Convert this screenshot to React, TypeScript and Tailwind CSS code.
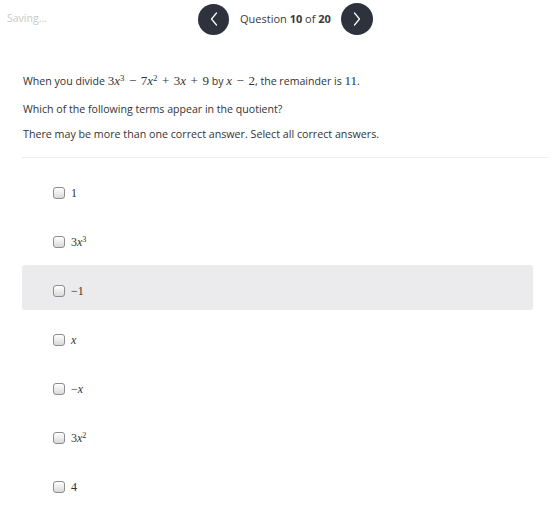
import React from "react";

const serif = { fontFamily: '"Liberation Serif", "Times New Roman", serif' };

function M({ children }: { children: React.ReactNode }) {
  return (
    <span className="text-[13px]" style={serif}>
      {children}
    </span>
  );
}
function X() {
  return <span className="italic">x</span>;
}
function Op({ children }: { children: React.ReactNode }) {
  return <span className="mx-[4.5px]">{children}</span>;
}
function Sup({ children }: { children: React.ReactNode }) {
  return <sup className="text-[0.68em] relative top-[-0.5em] align-baseline leading-none">{children}</sup>;
}

function Chevron({ dir }: { dir: "left" | "right" }) {
  return (
    <svg width="10" height="16" viewBox="0 0 10 16" fill="none">
      {dir === "left" ? (
        <polyline points="7.5,2 2.5,8 7.5,14" stroke="white" strokeWidth="1.2" strokeLinecap="round" strokeLinejoin="round" />
      ) : (
        <polyline points="2.5,2 7.5,8 2.5,14" stroke="white" strokeWidth="1.2" strokeLinecap="round" strokeLinejoin="round" />
      )}
    </svg>
  );
}

function Box() {
  return (
    <span className="block w-[12px] h-[12px] rounded-[3px] border border-[#8d8d8d] bg-gradient-to-b from-[#ffffff] to-[#d9d9d9] shrink-0" />
  );
}

const options: { node: React.ReactNode; hl?: boolean }[] = [
  { node: <>1</> },
  { node: <>3<X /><Sup>3</Sup></> },
  { node: <>−1</>, hl: true },
  { node: <><X /></> },
  { node: <>−<X /></> },
  { node: <>3<X /><Sup>2</Sup></> },
  { node: <>4</> },
];

export default function App() {
  return (
    <div
      className="w-[560px] h-[511px] bg-white text-[#333] overflow-hidden"
      style={{ fontFamily: '"Open Sans", "Liberation Sans", sans-serif' }}
    >
      <div className="h-[38px] flex items-center pl-[7px]">
        <div className="w-[191px] text-[10.5px] text-[#c8c8c8]">Saving...</div>
        <button className="w-[31px] h-[31px] rounded-full bg-[#2e323d] flex items-center justify-center">
          <Chevron dir="left" />
        </button>
        <div className="ml-[11px] text-[11px] text-[#3a3a3a]">
          Question <b>10</b> of <b>20</b>
        </div>
        <button className="ml-[10px] w-[32px] h-[32px] rounded-full bg-[#2e323d] flex items-center justify-center">
          <Chevron dir="right" />
        </button>
      </div>
      <div className="pl-[22px] pr-[11px]">
        <p className="mt-[33px] leading-[20px] text-[10.6px] pl-[1px]">
          When you divide{" "}
          <M>
            3<X /><Sup>3</Sup><Op>−</Op>7<X /><Sup>2</Sup><Op>+</Op>3<X /><Op>+</Op>9
          </M>{" "}
          by{" "}
          <M>
            <X /><Op>−</Op>2
          </M>
          , the remainder is <M>11</M>.
        </p>
        <p className="mt-[8px] leading-[20px] text-[10.6px] pl-[1px]">Which of the following terms appear in the quotient?</p>
        <p className="mt-[5px] leading-[20px] text-[10.7px] pl-[1px]">
          There may be more than one correct answer. Select all correct answers.
        </p>
        <div className="mt-[13px] h-px bg-[#eeeeee]" />
        <div className="mt-[9px] flex flex-col gap-[4px] w-[511px]">
          {options.map((o, i) => (
            <div
              key={i}
              className={`h-[45px] flex items-start pt-[20px] pl-[31px] gap-[6px] rounded-[3px] ${o.hl ? "bg-[#ebebed]" : ""}`}
            >
              <Box />
              <span className="text-[12px] leading-[12px] text-[#333]" style={serif}>
                {o.node}
              </span>
            </div>
          ))}
        </div>
      </div>
    </div>
  );
}
